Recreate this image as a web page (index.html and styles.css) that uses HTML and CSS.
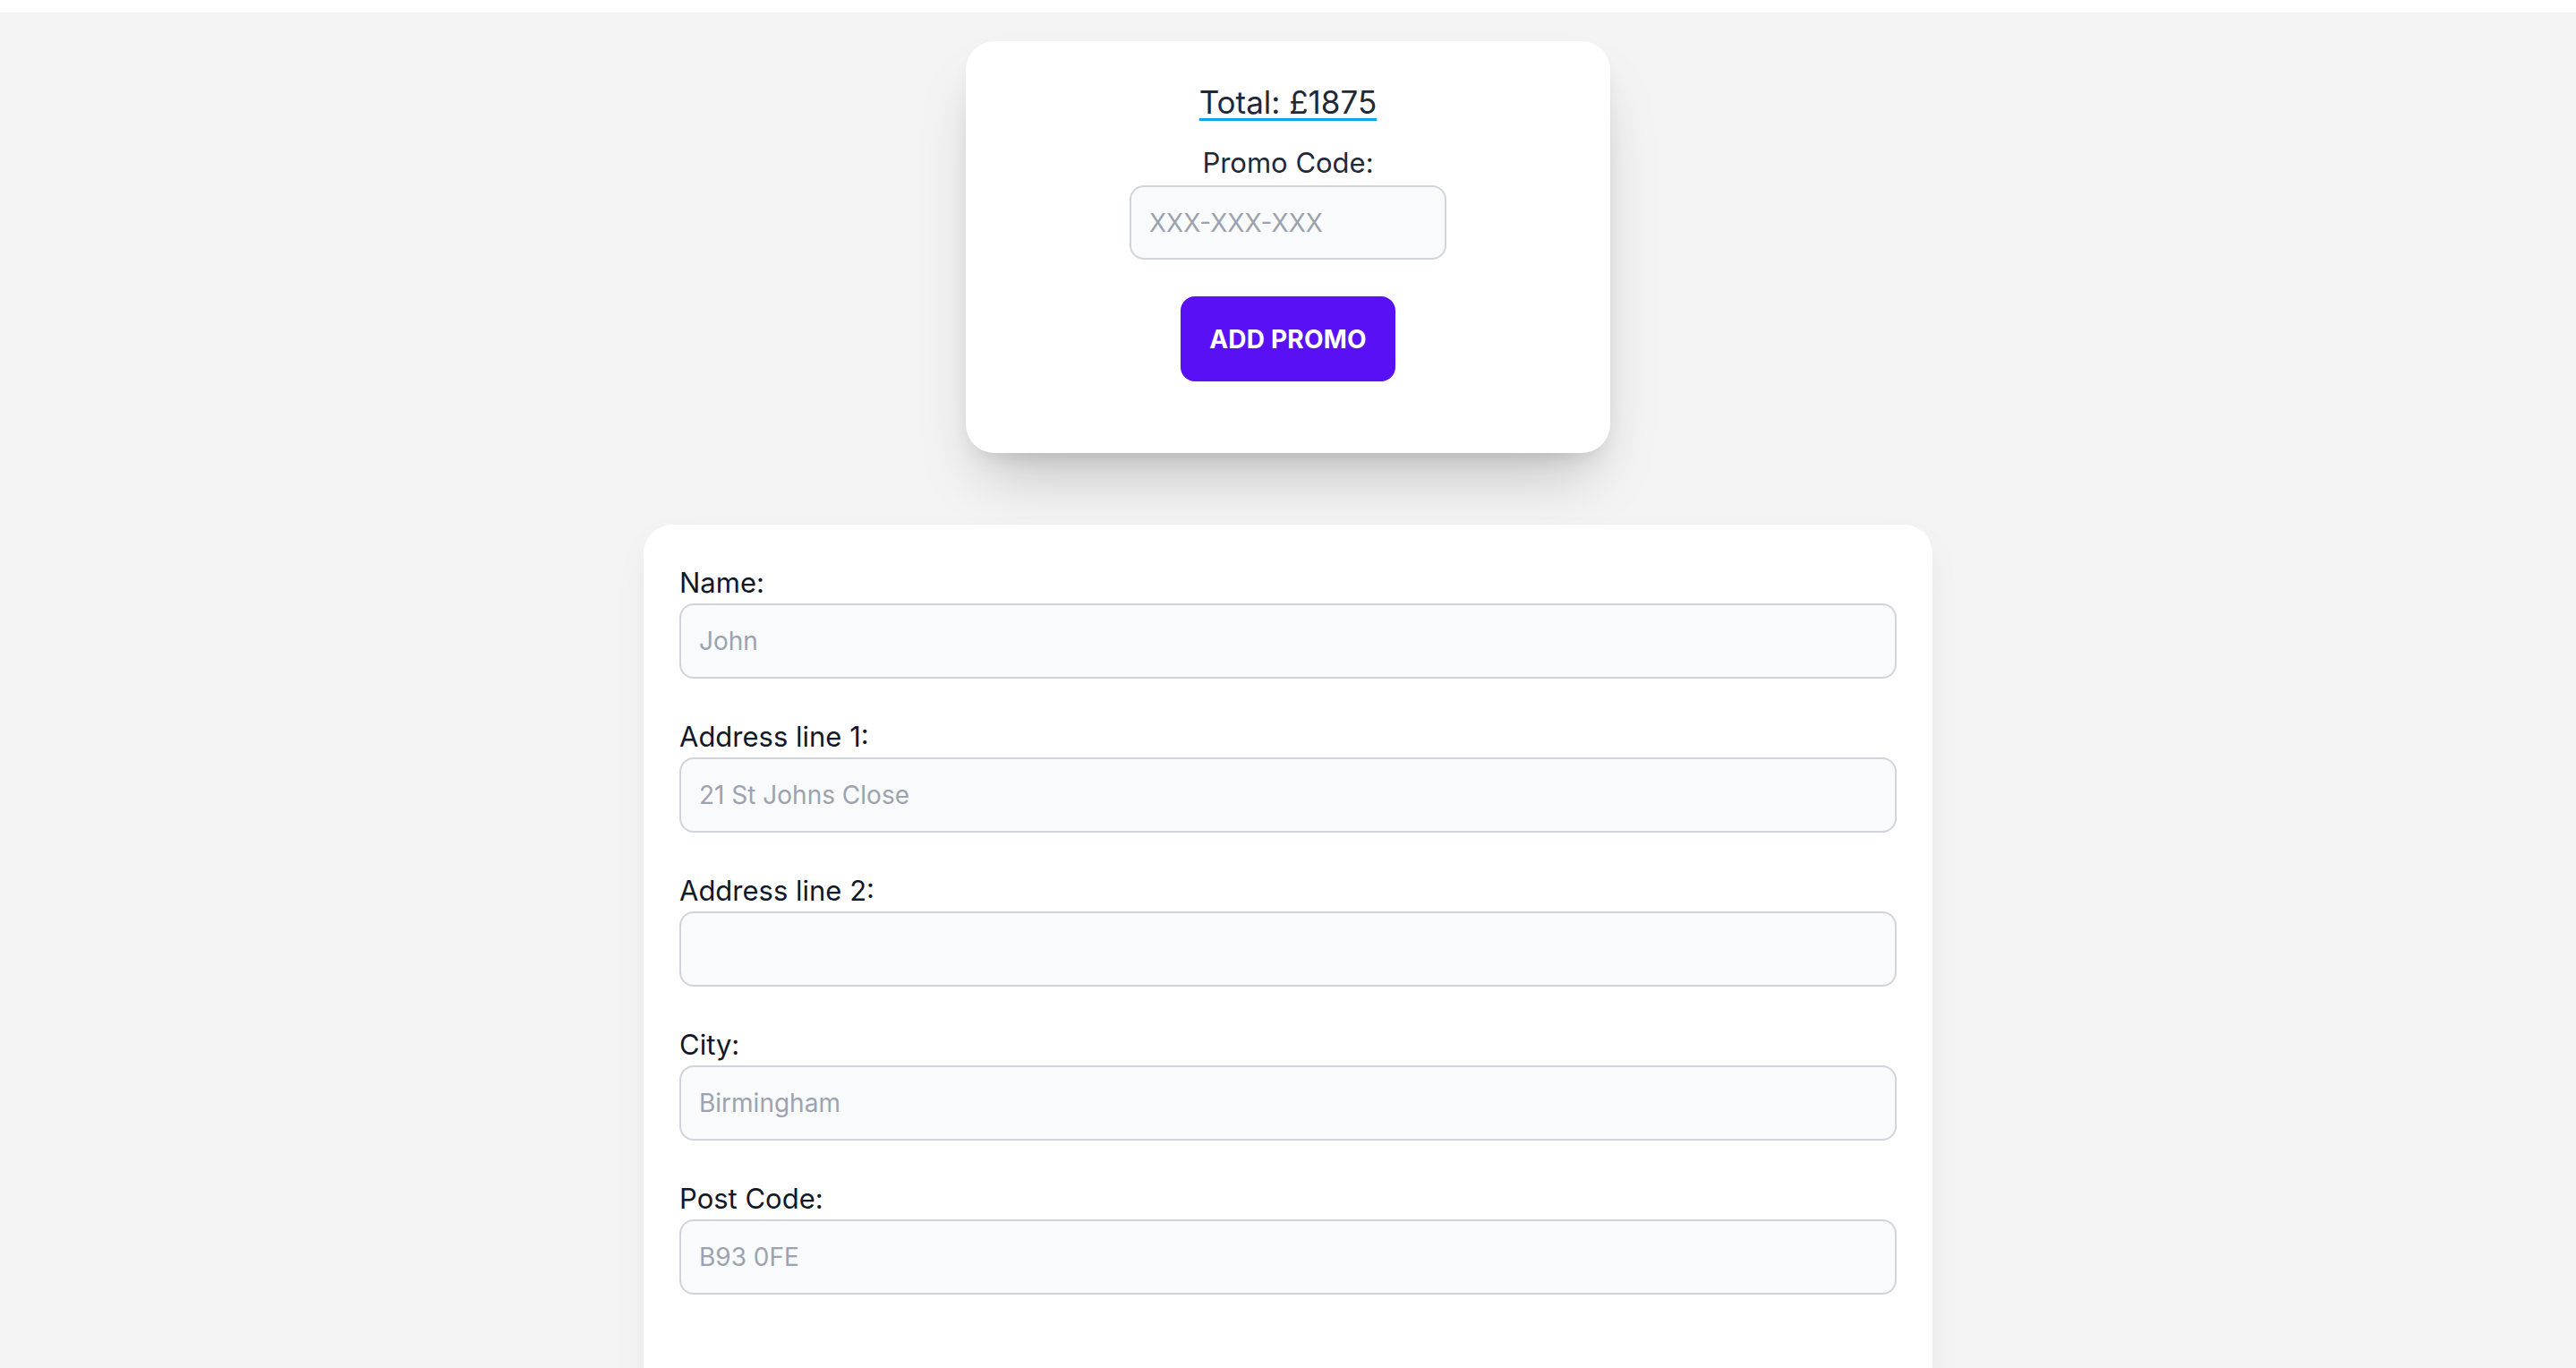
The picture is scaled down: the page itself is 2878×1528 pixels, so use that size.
FILE: index.html
```html
<!DOCTYPE html>
<html lang="en">
<head>
<meta charset="utf-8">
<title>Checkout</title>
<link rel="stylesheet" href="styles.css">
</head>
<body>
<div class="topbar"></div>
<main class="page">
  <section class="promo-card">
    <h2 class="total">Total: £1875</h2>
    <label class="promo-label" for="promo">Promo Code:</label>
    <input class="promo-input" id="promo" type="text" placeholder="XXX-XXX-XXX">
    <button class="promo-btn" type="button">ADD PROMO</button>
  </section>
  <form class="address-card">
    <div class="field">
      <label for="name">Name:</label>
      <input id="name" type="text" placeholder="John">
    </div>
    <div class="field">
      <label for="addr1">Address line 1:</label>
      <input id="addr1" type="text" placeholder="21 St Johns Close">
    </div>
    <div class="field">
      <label for="addr2">Address line 2:</label>
      <input id="addr2" type="text">
    </div>
    <div class="field">
      <label for="city">City:</label>
      <input id="city" type="text" placeholder="Birmingham">
    </div>
    <div class="field">
      <label for="post">Post Code:</label>
      <input id="post" type="text" placeholder="B93 0FE">
    </div>
  </form>
</main>
</body>
</html>
```
FILE: styles.css
```css
* { box-sizing: border-box; }

html, body {
  margin: 0;
  padding: 0;
}

body {
  background: #f4f4f4;
  font-family: Inter, "Noto Sans", "Liberation Sans", sans-serif;
  color: #1f2937;
}

.topbar {
  height: 14px;
  background: #ffffff;
}

.page {
  display: flex;
  flex-direction: column;
  align-items: center;
  padding-top: 32px;
}

.promo-card {
  width: 720px;
  background: #ffffff;
  border-radius: 32px;
  box-shadow: 0 40px 70px -20px rgba(0, 0, 0, 0.22), 0 12px 24px -10px rgba(0, 0, 0, 0.12);
  display: flex;
  flex-direction: column;
  align-items: center;
  padding: 44px 0 80px;
}

.total {
  margin: 0;
  font-size: 35px;
  line-height: 48px;
  font-weight: 400;
  color: #1f2937;
  text-decoration: underline;
  text-decoration-color: #0ea5e9;
  text-decoration-thickness: 3px;
  text-underline-offset: 5px;
}

.promo-label {
  margin-top: 24px;
  font-size: 31px;
  line-height: 40px;
  padding-bottom: 2px;
  color: #1f2937;
}

.promo-input {
  margin-top: 3px;
  width: 354px;
  height: 83px;
  border: 2px solid #d1d5db;
  border-radius: 16px;
  background: #f9fafb;
  padding: 0 20px;
  font-family: inherit;
  font-size: 28px;
  color: #1f2937;
  outline: none;
}

.promo-btn {
  margin-top: 41px;
  width: 240px;
  height: 95px;
  border: none;
  border-radius: 16px;
  background: #5a10f4;
  color: #ffffff;
  font-family: inherit;
  font-size: 28px;
  font-weight: 700;
  letter-spacing: 0.2px;
  cursor: pointer;
}

.address-card {
  margin-top: 80px;
  width: 1440px;
  background: #ffffff;
  border-radius: 32px;
  box-shadow: 0 16px 40px -8px rgba(0, 0, 0, 0.08);
  padding: 48px 40px 120px;
  display: flex;
  flex-direction: column;
  gap: 48px;
}

.field {
  display: flex;
  flex-direction: column;
}

.field label {
  font-size: 31px;
  line-height: 34px;
  padding-bottom: 6px;
  color: #111827;
}

.field input {
  height: 84px;
  width: 100%;
  border: 2px solid #d1d5db;
  border-radius: 16px;
  background: #f9fafb;
  padding: 0 20px;
  font-family: inherit;
  font-size: 28px;
  color: #1f2937;
  outline: none;
}

input::placeholder {
  color: #9ca3af;
  opacity: 1;
}
```
